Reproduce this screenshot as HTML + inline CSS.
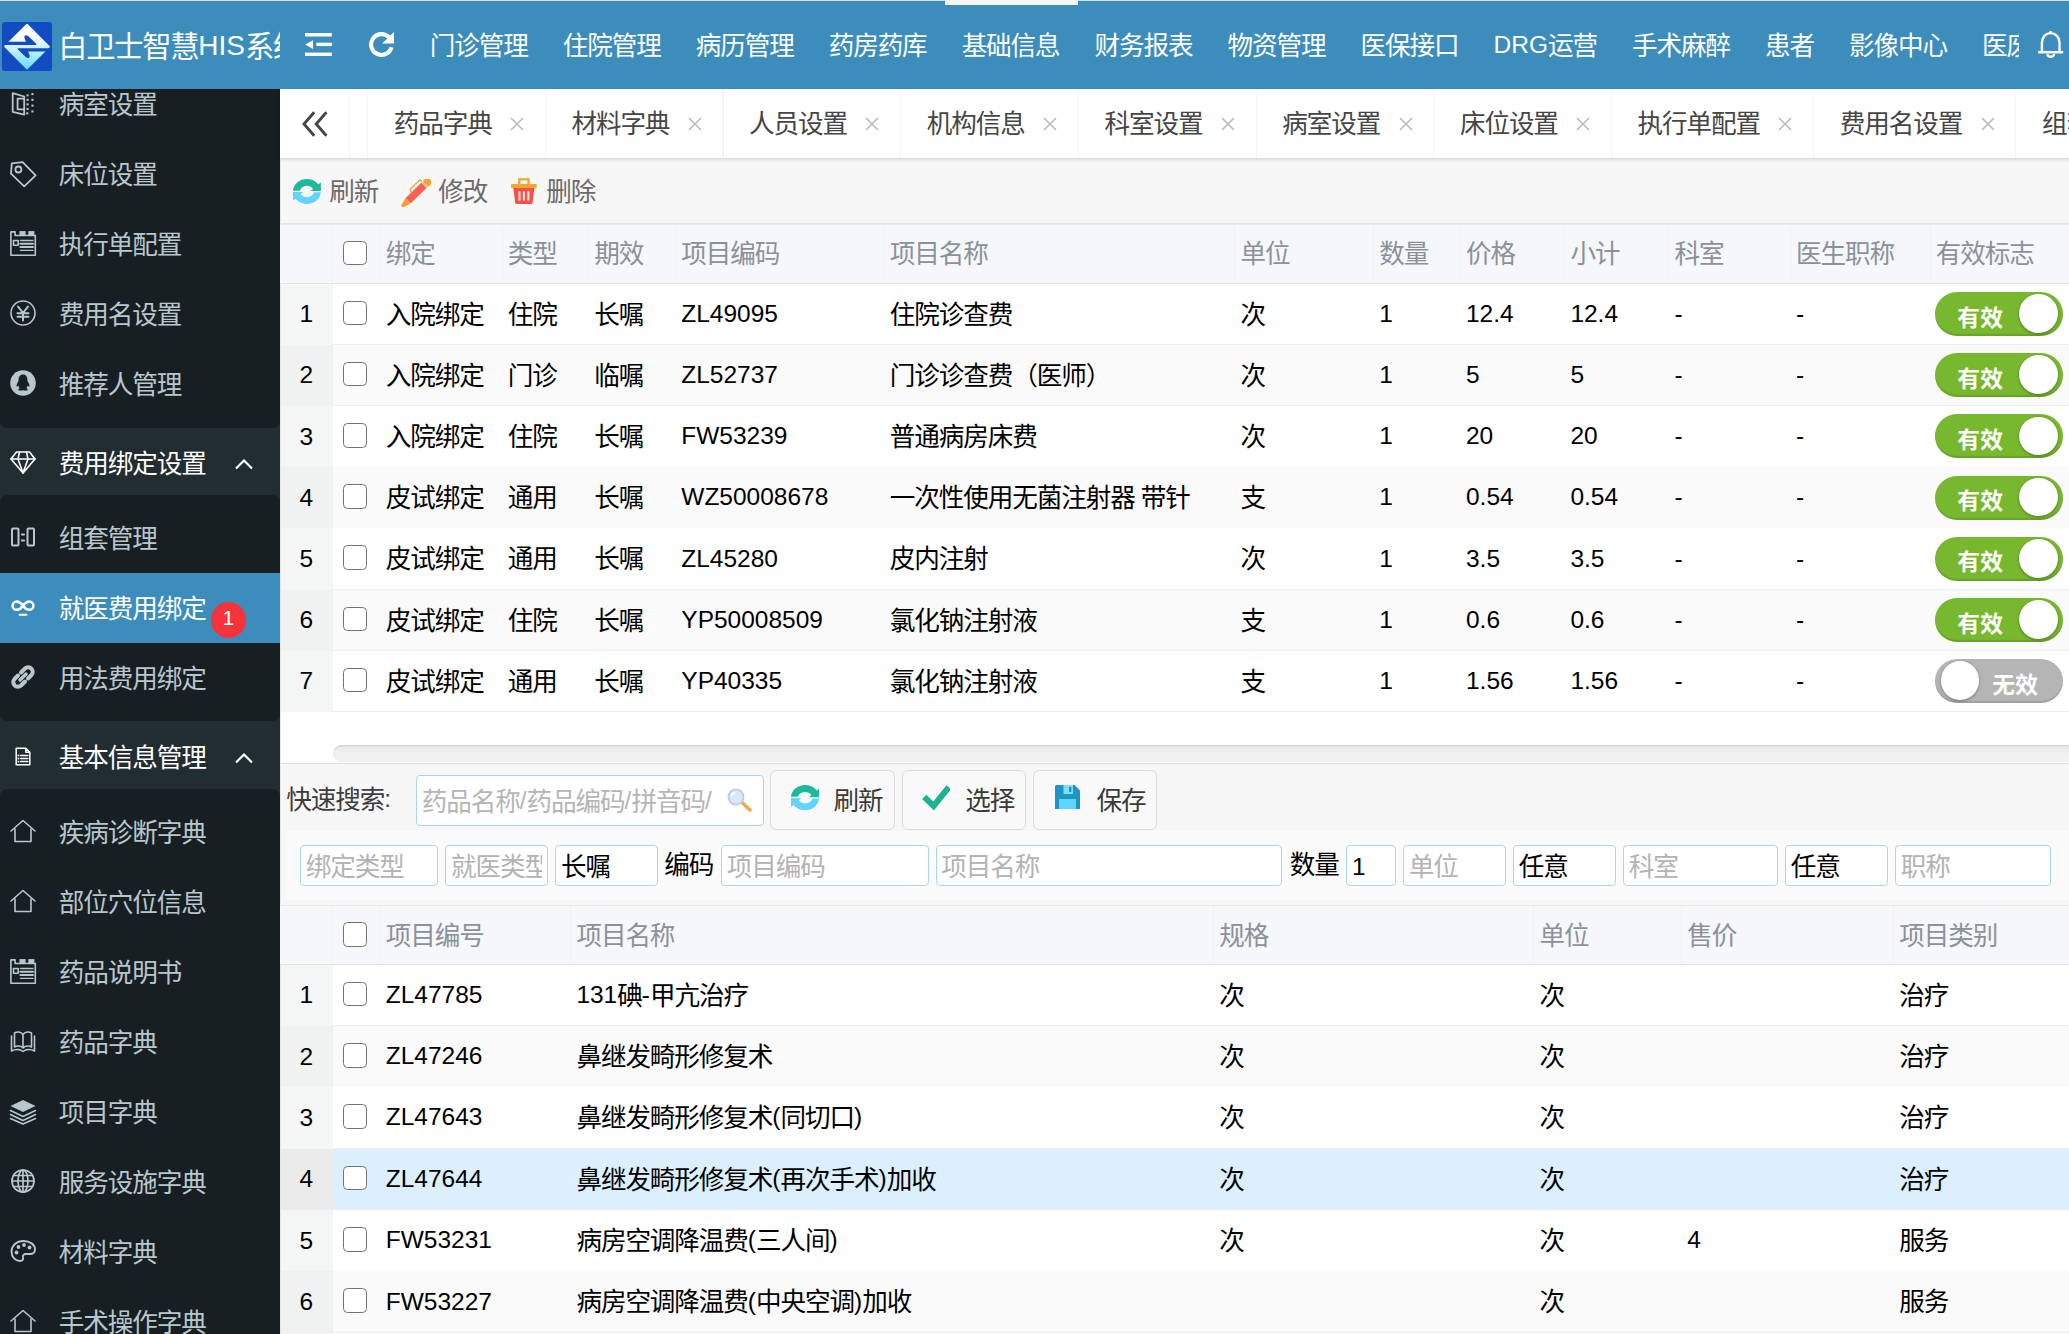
<!DOCTYPE html><html lang="zh-CN"><head><meta charset="utf-8"><title>白卫士智慧HIS系统</title>
<style>

*{box-sizing:border-box;margin:0;padding:0}
html,body{width:2069px;height:1334px;overflow:hidden;background:#fff}
body{position:relative;font-family:"Liberation Sans","Noto Sans CJK SC",sans-serif;font-size:25.6px;letter-spacing:-1.1px;color:#000;line-height:1}
.abs{position:absolute}
.l{position:relative;top:-1.8px;font-size:0.957em;letter-spacing:0}
.t{position:absolute;white-space:nowrap;line-height:30px;height:30px}
#hdr{position:absolute;left:0;top:0;width:2069px;height:89px;background:#3c8dbc;border-top:1px solid #dcdfe2;overflow:hidden}
#hdr .t{color:#fff}
#side{position:absolute;left:0;top:89px;width:280px;height:1245px;background:#222d32;overflow:hidden}
#side .blk{position:absolute;left:0;width:280px;background:#181f23;border-radius:7px}
#side .t{color:#b8c7ce;left:59px}
#side .t.h{color:#fff}
#side svg{position:absolute;overflow:visible}
#main{position:absolute;left:280px;top:89px;width:1789px;height:1245px;background:#f7f7f7;overflow:hidden}

</style></head><body>
<div id="hdr"></div>
<div class="abs" style="left:945px;top:0px;width:133px;height:5px;background:#f4f5f6"></div>
<svg class="abs" style="left:1.9px;top:21.8px;" width="50.2" height="49.3" viewBox="0 0 50.2 49.3">
<defs><linearGradient id="lg" x1="0" y1="0" x2="0" y2="1"><stop offset="0.1" stop-color="#ffffff"/><stop offset="0.3" stop-color="#f6fcff"/><stop offset="0.55" stop-color="#c9f1fd"/><stop offset="1" stop-color="#63defb"/></linearGradient>
<clipPath id="lc"><path d="M25 2.6 L47.2 24.7 L25 46.6 L2.9 24.4 Z"/></clipPath></defs>
<rect x="0" y="0" width="50.2" height="49.3" rx="3.3" fill="#134cc2"/>
<path d="M25 2.6 L47.2 24.7 L25 46.6 L2.9 24.4 Z" fill="url(#lg)" stroke="url(#lg)" stroke-width="1.6" stroke-linejoin="round"/>
<g fill="#134cc2">
<path d="M0 19.7 L24 19.7 L22.4 15.8 Q21.9 13.5 24 13.2 Q25.1 13.1 26.1 14 L34.2 21.7 Q34.9 22.5 34 23.1 L0 23.1 Z"/>
<path d="M50.2 29.6 L26.1 29.6 L27.7 33.5 Q28.2 35.8 26.1 36.1 Q25 36.2 24 35.3 L15.9 27.6 Q15.2 26.8 16.1 26.2 L50.2 26.2 Z"/>
</g>
</svg>
<div class="abs" style="left:0;top:1px;width:280px;height:88px;overflow:hidden">
<div class="t " style="left:58.3px;top:27.8px;color:#fff;font-size:29.26px;letter-spacing:-1.26px;line-height:36px;height:36px;">白卫士智慧<span class="l">HIS</span>系统</div>
</div>
<svg class="abs" style="left:304.9px;top:32.8px;" width="27" height="23.2" viewBox="0 0 27 23.2">
<g fill="#fff"><rect x="0" y="0" width="26.8" height="3.5"/><rect x="11.4" y="9.7" width="15.4" height="3.4"/><rect x="0" y="19.6" width="26.8" height="3.5"/><path d="M0.2 11.6 L8 7.2 L8 16.1 Z"/></g></svg>
<svg class="abs" style="left:368px;top:31px;" width="28" height="28" viewBox="0 0 28 28">
<path d="M20.85 6.15 A10.4 10.4 0 1 0 23.55 16.2" fill="none" stroke="#fff" stroke-width="4.1"/>
<path d="M26 1 L26 12.4 L14.1 12.4 Z" fill="#fff"/></svg>
<div class="abs" style="left:412.2px;top:1px;width:1606.7px;height:88px;overflow:hidden;white-space:nowrap;color:#fff;line-height:91.2px">
<span style="display:inline-block;padding:0 17.5px;height:88px">门诊管理</span><span style="display:inline-block;padding:0 17.5px;height:88px">住院管理</span><span style="display:inline-block;padding:0 17.5px;height:88px">病历管理</span><span style="display:inline-block;padding:0 17.5px;height:88px">药房药库</span><span style="display:inline-block;padding:0 17.5px;height:88px">基础信息</span><span style="display:inline-block;padding:0 17.5px;height:88px">财务报表</span><span style="display:inline-block;padding:0 17.5px;height:88px">物资管理</span><span style="display:inline-block;padding:0 17.5px;height:88px">医保接口</span><span style="display:inline-block;padding:0 17.5px;height:88px"><span class="l">DRG</span>运营</span><span style="display:inline-block;padding:0 17.5px;height:88px">手术麻醉</span><span style="display:inline-block;padding:0 17.5px;height:88px">患者</span><span style="display:inline-block;padding:0 17.5px;height:88px">影像中心</span><span style="display:inline-block;padding:0 17.5px;height:88px">医废管理</span><span style="display:inline-block;padding:0 17.5px;height:88px">系统设置</span>
</div>
<svg class="abs" style="left:2036.8px;top:29px;" width="28" height="30" viewBox="0 0 28 30">
<path d="M1.2 23.2 L26.2 23.2" fill="none" stroke="#fff" stroke-width="2.5"/>
<path d="M4.9 23 L4.9 13.4 A8.8 9.3 0 0 1 22.5 13.4 L22.5 23" fill="none" stroke="#fff" stroke-width="2.4"/>
<path d="M13.7 4.4 L13.7 2" fill="none" stroke="#fff" stroke-width="2.6"/>
<path d="M10.2 25 A3.6 3.6 0 0 0 17.2 25" fill="none" stroke="#fff" stroke-width="2.3"/></svg>
<div id="side">
<div class="blk" style="top:-20px;height:358.6px"></div>
<div class="blk" style="top:405.6px;height:226.39999999999998px"></div>
<div class="blk" style="top:699.7px;height:600px"></div>
<div class="abs" style="left:0;top:483.70000000000005px;width:280px;height:70px;background:#3c8dbc"></div>
<svg style="left:10px;top:0.5px;stroke-width:1.6" width="26" height="26" viewBox="0 0 26 26"><g fill="none" stroke="#b8c7ce" stroke-linejoin="round" stroke-linecap="round" stroke-width="1.8"><path d="M2.7 3.2 L14.2 6.5 L14.2 24.6 L2.7 21.8 Z"/><path d="M14.2 8.6 L7.6 8.6 L7.6 19.3 L14.2 19.3"/></g><g fill="#b8c7ce" stroke="none"><rect x="16.5" y="4.3" width="2.1" height="2.1"/><rect x="16.5" y="8.8" width="2.1" height="2.1"/><rect x="16.5" y="13.3" width="2.1" height="2.1"/><rect x="16.5" y="17.9" width="2.1" height="2.1"/><rect x="16.2" y="22.3" width="2.1" height="2.1"/><rect x="21.4" y="3" width="2.1" height="2.1"/><rect x="21.4" y="8.8" width="2.1" height="2.1"/><rect x="21.4" y="14.6" width="2.1" height="2.1"/><rect x="21.4" y="20.4" width="2.1" height="2.1"/></g></svg>
<div class="t " style="left:58.8px;top:0.8px;">病室设置</div>
<svg style="left:10px;top:71.0px;stroke-width:1.6" width="26" height="26" viewBox="0 0 26 26"><g fill="none" stroke="#b8c7ce" stroke-linejoin="round" stroke-linecap="round" stroke-width="1.8"><path d="M1.8 3.4 L12.6 2.2 L25.6 15.3 L14.2 26.3 L1 13.6 Z"/><circle cx="8.4" cy="9.5" r="3"/></g></svg>
<div class="t " style="left:58.8px;top:71.3px;">床位设置</div>
<svg style="left:10px;top:141.0px;stroke-width:1.6" width="26" height="26" viewBox="0 0 26 26"><g fill="none" stroke="#b8c7ce" stroke-linejoin="round" stroke-linecap="round"><path d="M0.9 1.9 L5.1 1.9 L5.1 5.5 L25.3 5.5 L25.3 25.2 L0.9 25.2 Z"/><rect x="3.5" y="10.5" width="4.7" height="4.8"/><path d="M10.4 10.5 L23 10.5 M10.4 20.3 L23 20.3" stroke-width="1.3"/><path d="M10.4 13.7 L23 13.7 M10.4 17 L23 17" stroke-width="2"/></g><g fill="#b8c7ce" stroke="none"><rect x="9.5" y="1.1" width="6.1" height="4.6"/><rect x="18.3" y="1.1" width="6.1" height="4.6"/></g></svg>
<div class="t " style="left:58.8px;top:141.3px;">执行单配置</div>
<svg style="left:10px;top:211.0px;stroke-width:1.6" width="26" height="26" viewBox="0 0 26 26"><g fill="none" stroke="#b8c7ce" stroke-linejoin="round" stroke-linecap="round"><circle cx="13" cy="13" r="12"/><path d="M8 6.5 L13 13 L18 6.5 M13 13 L13 20.5 M7.5 13.2 L18.5 13.2 M7.5 16.8 L18.5 16.8" stroke-width="2"/></g></svg>
<div class="t " style="left:58.8px;top:211.3px;">费用名设置</div>
<svg style="left:10px;top:281.0px;stroke-width:1.6" width="26" height="26" viewBox="0 0 26 26"><g fill="#b8c7ce" stroke="none"><circle cx="13" cy="13" r="12.8"/></g><path fill="#181f23" d="M13 4.5 C9.8 4.5 8.4 7 8.6 10 C8.6 11 8 11.8 7.4 13 C6.6 14.6 6.2 16.4 6.8 16.8 C7.3 17 7.9 16 8.3 15.6 C8.5 16.8 9 17.6 9.8 18.3 C8.8 18.7 8 19.3 8.3 20 C8.8 20.9 11.6 20.6 13 20.2 C14.4 20.6 17.2 20.9 17.7 20 C18 19.3 17.2 18.7 16.2 18.3 C17 17.6 17.5 16.8 17.7 15.6 C18.1 16 18.7 17 19.2 16.8 C19.8 16.4 19.4 14.6 18.6 13 C18 11.8 17.4 11 17.4 10 C17.6 7 16.2 4.5 13 4.5 Z"/></svg>
<div class="t " style="left:58.8px;top:281.3px;">推荐人管理</div>
<svg style="left:10px;top:360.0px;stroke-width:1.6" width="26" height="26" viewBox="0 0 26 26"><g fill="none" stroke="#fff" stroke-linejoin="round" stroke-linecap="round"><path d="M6.5 3 L19.5 3 L25 10 L13 24 L1 10 Z"/><path d="M1 10 L25 10 M9.5 3 L8 10 L13 24 L18 10 L16.5 3"/></g></svg>
<div class="t h" style="left:58.8px;top:360.3px;">费用绑定设置</div>
<svg style="left:10px;top:434.8px;stroke-width:1.6" width="26" height="26" viewBox="0 0 26 26"><g fill="none" stroke="#b8c7ce" stroke-linejoin="round" stroke-linecap="round" stroke-width="2"><rect x="2" y="4.5" width="6.5" height="17" rx="1"/><rect x="17.5" y="4.5" width="6.5" height="17" rx="1"/><path d="M12 10.5 L14 10.5 M12 16.5 L14 16.5" stroke-width="2.2"/></g></svg>
<div class="t " style="left:58.8px;top:435.1px;">组套管理</div>
<svg style="left:10px;top:504.5px;stroke-width:1.6" width="26" height="26" viewBox="0 0 26 26"><g fill="none" stroke="#fff" stroke-linejoin="round" stroke-linecap="round" stroke-width="2.5"><path d="M13 11.7 C10.8 8.6 9 7.6 6.7 7.6 A4.1 4.1 0 0 0 6.7 15.8 C9 15.8 10.8 14.8 13 11.7 C15.2 8.6 17 7.6 19.3 7.6 A4.1 4.1 0 0 1 19.3 15.8 C17 15.8 15.2 14.8 13 11.7 Z"/><path d="M9.6 20.8 L16.4 20.8" stroke-width="2.1"/></g></svg>
<div class="t " style="left:58.8px;top:504.8px;color:#fff;">就医费用绑定</div>
<svg style="left:10px;top:574.5px;stroke-width:1.6" width="26" height="26" viewBox="0 0 26 26"><g fill="none" stroke="#b8c7ce" stroke-linejoin="round" stroke-linecap="round" stroke-width="4"><path d="M11 8.5 L15 4.5 A4.6 4.6 0 0 1 21.5 11 L18 14.5"/><path d="M15 17.5 L11 21.5 A4.6 4.6 0 0 1 4.5 15 L8 11.5"/><path d="M10 16 L16 10" stroke-width="3.4"/></g></svg>
<div class="t " style="left:58.8px;top:574.8px;">用法费用绑定</div>
<svg style="left:10px;top:653.5px;stroke-width:1.6" width="26" height="26" viewBox="0 0 26 26"><g transform="translate(2.6 2.9) scale(0.8)"><g fill="none" stroke="#fff" stroke-linejoin="round" stroke-linecap="round" stroke-width="1.9"><path d="M4.5 3 L16.5 3 L21.5 8 L21.5 23.5 L4.5 23.5 Z M16.5 3 L16.5 8 L21.5 8"/><path d="M10 12 L19 12 M10 15.8 L19 15.8 M10 19.6 L19 19.6"/></g><g fill="#fff" stroke="none"><rect x="6.3" y="11" width="2" height="2"/><rect x="6.3" y="14.8" width="2" height="2"/><rect x="6.3" y="18.6" width="2" height="2"/></g></g></svg>
<div class="t h" style="left:58.8px;top:653.8px;">基本信息管理</div>
<svg style="left:10px;top:728.5px;stroke-width:1.6" width="26" height="26" viewBox="0 0 26 26"><g fill="none" stroke="#b8c7ce" stroke-linejoin="round" stroke-linecap="round"><path d="M1 13 L13 2.5 L25 13"/><path d="M5 11 L5 23.5 L21 23.5 L21 11"/></g></svg>
<div class="t " style="left:58.8px;top:728.8px;">疾病诊断字典</div>
<svg style="left:10px;top:798.5px;stroke-width:1.6" width="26" height="26" viewBox="0 0 26 26"><g fill="none" stroke="#b8c7ce" stroke-linejoin="round" stroke-linecap="round"><path d="M1 13 L13 2.5 L25 13"/><path d="M5 11 L5 23.5 L21 23.5 L21 11"/></g></svg>
<div class="t " style="left:58.8px;top:798.8px;">部位穴位信息</div>
<svg style="left:10px;top:868.5px;stroke-width:1.6" width="26" height="26" viewBox="0 0 26 26"><g fill="none" stroke="#b8c7ce" stroke-linejoin="round" stroke-linecap="round"><path d="M0.9 1.9 L5.1 1.9 L5.1 5.5 L25.3 5.5 L25.3 25.2 L0.9 25.2 Z"/><rect x="3.5" y="10.5" width="4.7" height="4.8"/><path d="M10.4 10.5 L23 10.5 M10.4 20.3 L23 20.3" stroke-width="1.3"/><path d="M10.4 13.7 L23 13.7 M10.4 17 L23 17" stroke-width="2"/></g><g fill="#b8c7ce" stroke="none"><rect x="9.5" y="1.1" width="6.1" height="4.6"/><rect x="18.3" y="1.1" width="6.1" height="4.6"/></g></svg>
<div class="t " style="left:58.8px;top:868.8px;">药品说明书</div>
<svg style="left:10px;top:938.5px;stroke-width:1.6" width="26" height="26" viewBox="0 0 26 26"><g fill="none" stroke="#b8c7ce" stroke-linejoin="round" stroke-linecap="round"><path d="M13 6.5 C11 3.5 7 3.5 4.5 5 L4.5 19 C7 17.5 11 17.5 13 20 C15 17.5 19 17.5 21.5 19 L21.5 5 C19 3.5 15 3.5 13 6.5 Z M13 6.5 L13 20"/><path d="M1.5 8 L1.5 23 C5 21 10 21 13 23.5 C16 21 21 21 24.5 23 L24.5 8"/></g></svg>
<div class="t " style="left:58.8px;top:938.8px;">药品字典</div>
<svg style="left:10px;top:1008.5px;stroke-width:1.6" width="26" height="26" viewBox="0 0 26 26"><g fill="#b8c7ce" stroke="none"><path d="M13 2 L25.5 8 L13 14 L0.5 8 Z"/></g><g fill="none" stroke="#b8c7ce" stroke-linejoin="round" stroke-linecap="round"><path d="M0.5 12.5 L13 18.5 L25.5 12.5 M0.5 16.5 L13 22.5 L25.5 16.5 M0.5 20.5 L13 26 L25.5 20.5" stroke-width="1.6"/></g></svg>
<div class="t " style="left:58.8px;top:1008.8px;">项目字典</div>
<svg style="left:10px;top:1078.5px;stroke-width:1.6" width="26" height="26" viewBox="0 0 26 26"><g fill="none" stroke="#b8c7ce" stroke-linejoin="round" stroke-linecap="round" stroke-width="1.7"><circle cx="13" cy="13" r="11"/><ellipse cx="13" cy="13" rx="5" ry="11"/><path d="M13 2 L13 24 M2 13 L24 13 M3.6 7.5 L22.4 7.5 M3.6 18.5 L22.4 18.5"/></g></svg>
<div class="t " style="left:58.8px;top:1078.8px;">服务设施字典</div>
<svg style="left:10px;top:1148.5px;stroke-width:1.6" width="26" height="26" viewBox="0 0 26 26"><g fill="none" stroke="#b8c7ce" stroke-linejoin="round" stroke-linecap="round" stroke-width="1.9"><path d="M13.5 3 C6 3 1.5 8 1.5 13.5 C1.5 19 5.5 23 10 23 C13 23 13.5 21 13 19.5 C12.5 17.5 13.5 16 16 16 L20 16 C23 16 25 14 25 11.5 C25 6.5 20 3 13.5 3 Z"/></g><g fill="#b8c7ce" stroke="none"><circle cx="6.5" cy="14.5" r="1.9"/><circle cx="8.5" cy="9" r="1.9"/><circle cx="14" cy="7" r="1.9"/><circle cx="19.5" cy="9.5" r="1.9"/></g></svg>
<div class="t " style="left:58.8px;top:1148.8px;">材料字典</div>
<svg style="left:10px;top:1218.5px;stroke-width:1.6" width="26" height="26" viewBox="0 0 26 26"><g fill="none" stroke="#b8c7ce" stroke-linejoin="round" stroke-linecap="round"><path d="M1 13 L13 2.5 L25 13"/><path d="M5 11 L5 23.5 L21 23.5 L21 11"/></g></svg>
<div class="t " style="left:58.8px;top:1218.8px;">手术操作字典</div>
<svg style="left:234px;top:369px" width="20" height="12" viewBox="0 0 20 12"><path d="M2 10.5 L10 2.5 L18 10.5" fill="none" stroke="#fff" stroke-width="2.2"/></svg>
<svg style="left:234px;top:662.5px" width="20" height="12" viewBox="0 0 20 12"><path d="M2 10.5 L10 2.5 L18 10.5" fill="none" stroke="#fff" stroke-width="2.2"/></svg>
<div class="abs" style="left:210.5px;top:513px;width:35.5px;height:35.5px;border-radius:50%;background:#f5333a;color:#fff;font-size:21px;letter-spacing:0;line-height:32px;text-align:center">1</div>
</div>
<div class="abs" style="left:280px;top:89px;width:1789px;height:1245px;background:#f7f7f7"></div>
<div class="abs" style="left:280px;top:89px;width:1789px;height:69.8px;background:#fff;border-bottom:1px solid #dcdcdc;box-shadow:0 1px 3px rgba(0,0,0,.12);z-index:2"></div>
<div class="abs" style="left:280px;top:89px;width:1789px;height:70px;overflow:hidden;z-index:3">
<div class="abs" style="left:69px;top:0;width:1.2px;height:69px;background:#f4f4f4"></div>
<div class="abs" style="left:87px;top:0;width:1.2px;height:69px;background:#f4f4f4"></div>
<svg class="abs" style="left:22px;top:22px" width="26" height="26" viewBox="0 0 26 26"><path d="M12.2 1.2 L2 13 L12.2 24.8 M24.4 1.2 L14.2 13 L24.4 24.8" fill="none" stroke="#464646" stroke-width="2.9"/></svg>
<div class="t" style="left:113.7px;top:19.5px;color:#454545">药品字典</div>
<svg class="abs" style="left:230.0px;top:28px" width="14" height="14" viewBox="0 0 14 14"><path d="M1 1 L13 13 M13 1 L1 13" stroke="#b9b9b9" stroke-width="1.5" fill="none"/></svg>
<div class="abs" style="left:264.70000000000005px;top:0;width:1.2px;height:69px;background:#f4f4f4"></div>
<div class="t" style="left:291.4px;top:19.5px;color:#454545">材料字典</div>
<svg class="abs" style="left:407.7px;top:28px" width="14" height="14" viewBox="0 0 14 14"><path d="M1 1 L13 13 M13 1 L1 13" stroke="#b9b9b9" stroke-width="1.5" fill="none"/></svg>
<div class="abs" style="left:442.4000000000001px;top:0;width:1.2px;height:69px;background:#f4f4f4"></div>
<div class="t" style="left:469.1px;top:19.5px;color:#454545">人员设置</div>
<svg class="abs" style="left:585.4px;top:28px" width="14" height="14" viewBox="0 0 14 14"><path d="M1 1 L13 13 M13 1 L1 13" stroke="#b9b9b9" stroke-width="1.5" fill="none"/></svg>
<div class="abs" style="left:620.1000000000001px;top:0;width:1.2px;height:69px;background:#f4f4f4"></div>
<div class="t" style="left:646.8px;top:19.5px;color:#454545">机构信息</div>
<svg class="abs" style="left:763.1px;top:28px" width="14" height="14" viewBox="0 0 14 14"><path d="M1 1 L13 13 M13 1 L1 13" stroke="#b9b9b9" stroke-width="1.5" fill="none"/></svg>
<div class="abs" style="left:797.8000000000002px;top:0;width:1.2px;height:69px;background:#f4f4f4"></div>
<div class="t" style="left:824.5px;top:19.5px;color:#454545">科室设置</div>
<svg class="abs" style="left:940.8px;top:28px" width="14" height="14" viewBox="0 0 14 14"><path d="M1 1 L13 13 M13 1 L1 13" stroke="#b9b9b9" stroke-width="1.5" fill="none"/></svg>
<div class="abs" style="left:975.5000000000002px;top:0;width:1.2px;height:69px;background:#f4f4f4"></div>
<div class="t" style="left:1002.2px;top:19.5px;color:#454545">病室设置</div>
<svg class="abs" style="left:1118.5px;top:28px" width="14" height="14" viewBox="0 0 14 14"><path d="M1 1 L13 13 M13 1 L1 13" stroke="#b9b9b9" stroke-width="1.5" fill="none"/></svg>
<div class="abs" style="left:1153.2000000000003px;top:0;width:1.2px;height:69px;background:#f4f4f4"></div>
<div class="t" style="left:1179.9px;top:19.5px;color:#454545">床位设置</div>
<svg class="abs" style="left:1296.2px;top:28px" width="14" height="14" viewBox="0 0 14 14"><path d="M1 1 L13 13 M13 1 L1 13" stroke="#b9b9b9" stroke-width="1.5" fill="none"/></svg>
<div class="abs" style="left:1330.9000000000003px;top:0;width:1.2px;height:69px;background:#f4f4f4"></div>
<div class="t" style="left:1357.6px;top:19.5px;color:#454545">执行单配置</div>
<svg class="abs" style="left:1498.4px;top:28px" width="14" height="14" viewBox="0 0 14 14"><path d="M1 1 L13 13 M13 1 L1 13" stroke="#b9b9b9" stroke-width="1.5" fill="none"/></svg>
<div class="abs" style="left:1533.1000000000004px;top:0;width:1.2px;height:69px;background:#f4f4f4"></div>
<div class="t" style="left:1559.8px;top:19.5px;color:#454545">费用名设置</div>
<svg class="abs" style="left:1700.6px;top:28px" width="14" height="14" viewBox="0 0 14 14"><path d="M1 1 L13 13 M13 1 L1 13" stroke="#b9b9b9" stroke-width="1.5" fill="none"/></svg>
<div class="abs" style="left:1735.3000000000004px;top:0;width:1.2px;height:69px;background:#f4f4f4"></div>
<div class="t" style="left:1762.0px;top:19.5px;color:#454545">组套管理</div>
<svg class="abs" style="left:1878.3px;top:28px" width="14" height="14" viewBox="0 0 14 14"><path d="M1 1 L13 13 M13 1 L1 13" stroke="#b9b9b9" stroke-width="1.5" fill="none"/></svg>
<div class="abs" style="left:1913.0000000000005px;top:0;width:1.2px;height:69px;background:#f4f4f4"></div>
</div>
<div class="abs" style="left:280px;top:223px;width:1789px;height:1px;background:#e4e4e4"></div>
<svg class="abs" style="left:293px;top:178.9px;" width="27.8" height="25.0" viewBox="0 0 27.8 25">
<defs><clipPath id="ct293"><rect x="0" y="0" width="27.8" height="11.7"/></clipPath><clipPath id="cb293"><rect x="0" y="13.3" width="27.8" height="11.7"/></clipPath></defs>
<g clip-path="url(#ct293)"><ellipse cx="13.9" cy="12.5" rx="10.5" ry="9.1" fill="none" stroke="#1db99b" stroke-width="6.8"/></g>
<path d="M27.8 3.3 L27.8 12 L17.6 12 Z" fill="#1db99b"/>
<g clip-path="url(#cb293)"><ellipse cx="13.9" cy="12.5" rx="10.5" ry="9.1" fill="none" stroke="#62d4fb" stroke-width="6.8"/></g>
<path d="M0 21.7 L0 13 L10.2 13 Z" fill="#62d4fb"/></svg>
<div class="t " style="left:329.3px;top:176.8px;color:#6b6b6b;">刷新</div>
<svg class="abs" style="left:401px;top:179px;" width="30" height="28" viewBox="0 0 30 28">
<g transform="rotate(-44 15 14)"><rect x="4" y="10.4" width="22" height="7.4" fill="#fb5f52"/><path d="M4 10.4 L-4.5 12.6 L-4.5 15.6 L4 17.8 Z" fill="#f9a033"/><rect x="26" y="10.4" width="2" height="7.4" fill="#f9c27a"/><rect x="28" y="10" width="6.5" height="8.2" rx="1.8" fill="#f9a033"/><path d="M12 10 L13.5 7.2 L27 7.2 L27 10" fill="none" stroke="#f9a033" stroke-width="1.3"/></g></svg>
<div class="t " style="left:438.3px;top:176.8px;color:#6b6b6b;">修改</div>
<svg class="abs" style="left:511.2px;top:177.8px;" width="25.8" height="26.7" viewBox="0 0 28 29">
<path d="M9 7.5 L9 1.5 L19 1.5 L19 7.5" fill="none" stroke="#f7a531" stroke-width="2.6"/>
<rect x="0" y="6.5" width="28" height="4.6" rx="1.2" fill="#f7a531"/>
<path d="M2.5 11 L25.5 11 L23.5 26.5 C23.4 27.8 22.6 28.5 21.5 28.5 L6.5 28.5 C5.4 28.5 4.6 27.8 4.5 26.5 Z" fill="#f5514c"/>
<g fill="#fde3dc"><rect x="8" y="14.5" width="2.3" height="10"/><rect x="12.85" y="14.5" width="2.3" height="10"/><rect x="17.7" y="14.5" width="2.3" height="10"/></g></svg>
<div class="t " style="left:546.3px;top:176.8px;color:#6b6b6b;">删除</div>
<div class="abs" style="left:280px;top:283px;width:1789px;height:480px;background:#fff"></div>
<div class="abs" style="left:280px;top:223.8px;width:1789px;height:60.699999999999996px;background:#f5f7fa;border-top:1px solid #e9ebef;border-bottom:1.4px solid #e1e3e8;z-index:1"></div>
<div class="abs" style="left:332.0px;top:224.8px;width:1px;height:57.8px;background:#eff1f5;z-index:1"></div>
<div class="abs" style="left:379.5px;top:224.8px;width:1px;height:57.8px;background:#eff1f5;z-index:1"></div>
<div class="abs" style="left:501.5px;top:224.8px;width:1px;height:57.8px;background:#eff1f5;z-index:1"></div>
<div class="abs" style="left:588.0px;top:224.8px;width:1px;height:57.8px;background:#eff1f5;z-index:1"></div>
<div class="abs" style="left:675.0px;top:224.8px;width:1px;height:57.8px;background:#eff1f5;z-index:1"></div>
<div class="abs" style="left:883.5px;top:224.8px;width:1px;height:57.8px;background:#eff1f5;z-index:1"></div>
<div class="abs" style="left:1234.1px;top:224.8px;width:1px;height:57.8px;background:#eff1f5;z-index:1"></div>
<div class="abs" style="left:1372.9px;top:224.8px;width:1px;height:57.8px;background:#eff1f5;z-index:1"></div>
<div class="abs" style="left:1459.7px;top:224.8px;width:1px;height:57.8px;background:#eff1f5;z-index:1"></div>
<div class="abs" style="left:1564.1px;top:224.8px;width:1px;height:57.8px;background:#eff1f5;z-index:1"></div>
<div class="abs" style="left:1668.1px;top:224.8px;width:1px;height:57.8px;background:#eff1f5;z-index:1"></div>
<div class="abs" style="left:1789.7px;top:224.8px;width:1px;height:57.8px;background:#eff1f5;z-index:1"></div>
<div class="abs" style="left:1929.5px;top:224.8px;width:1px;height:57.8px;background:#eff1f5;z-index:1"></div>
<div class="abs" style="left:342.85px;top:240.85px;width:24.5px;height:24.5px;border:1.8px solid #737373;border-radius:4.5px;background:#fff;z-index:2"></div>
<div class="t " style="left:385.8px;top:239.3px;color:#8b919a;z-index:2;">绑定</div>
<div class="t " style="left:507.8px;top:239.3px;color:#8b919a;z-index:2;">类型</div>
<div class="t " style="left:594.3px;top:239.3px;color:#8b919a;z-index:2;">期效</div>
<div class="t " style="left:681.3px;top:239.3px;color:#8b919a;z-index:2;">项目编码</div>
<div class="t " style="left:889.8px;top:239.3px;color:#8b919a;z-index:2;">项目名称</div>
<div class="t " style="left:1240.4px;top:239.3px;color:#8b919a;z-index:2;">单位</div>
<div class="t " style="left:1379.2px;top:239.3px;color:#8b919a;z-index:2;">数量</div>
<div class="t " style="left:1466.0px;top:239.3px;color:#8b919a;z-index:2;">价格</div>
<div class="t " style="left:1570.4px;top:239.3px;color:#8b919a;z-index:2;">小计</div>
<div class="t " style="left:1674.4px;top:239.3px;color:#8b919a;z-index:2;">科室</div>
<div class="t " style="left:1796.0px;top:239.3px;color:#8b919a;z-index:2;">医生职称</div>
<div class="t " style="left:1935.8px;top:239.3px;color:#8b919a;z-index:2;">有效标志</div>
<div class="abs" style="left:280px;top:283.6px;width:1789px;height:61.7px;background:#fff;border-bottom:1px solid #eeeeee"></div>
<div class="abs" style="left:280px;top:283.6px;width:52.5px;height:61.2px;background:#f4f5f5"></div>
<div class="t" style="left:280px;width:52.5px;text-align:center;letter-spacing:0;top:300.0px"><span class="l">1</span></div>
<div class="abs" style="left:342.85px;top:300.65px;width:24.5px;height:24.5px;border:1.8px solid #737373;border-radius:4.5px;background:#fff;z-index:2"></div>
<div class="t " style="left:385.8px;top:299.5px;">入院绑定</div>
<div class="t " style="left:507.8px;top:299.5px;">住院</div>
<div class="t " style="left:594.3px;top:299.5px;">长嘱</div>
<div class="t " style="left:681.3px;top:299.5px;"><span class="l">ZL49095</span></div>
<div class="t " style="left:889.8px;top:299.5px;">住院诊查费</div>
<div class="t " style="left:1240.4px;top:299.5px;">次</div>
<div class="t " style="left:1379.2px;top:299.5px;"><span class="l">1</span></div>
<div class="t " style="left:1466.0px;top:299.5px;"><span class="l">12.4</span></div>
<div class="t " style="left:1570.4px;top:299.5px;"><span class="l">12.4</span></div>
<div class="t " style="left:1674.4px;top:299.5px;"><span class="l">-</span></div>
<div class="t " style="left:1796.0px;top:299.5px;"><span class="l">-</span></div>
<div class="abs" style="left:1935px;top:291.9px;width:128px;height:44px;border-radius:22px;background:#77b82f;box-shadow:inset 0 -2px 1px rgba(0,0,0,.12)"></div>
<div class="abs" style="left:2019px;top:294.1px;width:38.8px;height:38.8px;border-radius:50%;background:#fff;box-shadow:0 1px 3px rgba(0,0,0,.35)"></div>
<div class="t " style="left:1957.2px;top:302.6px;color:#fff;font-size:22.78px;letter-spacing:-0.98px;font-weight:bold;letter-spacing:0.4px">有效</div>
<div class="abs" style="left:280px;top:344.8px;width:1789px;height:61.7px;background:#fafafa;border-bottom:1px solid #eeeeee"></div>
<div class="abs" style="left:280px;top:344.8px;width:52.5px;height:61.2px;background:#f0f1f1"></div>
<div class="t" style="left:280px;width:52.5px;text-align:center;letter-spacing:0;top:361.2px"><span class="l">2</span></div>
<div class="abs" style="left:342.85px;top:361.85px;width:24.5px;height:24.5px;border:1.8px solid #737373;border-radius:4.5px;background:#fff;z-index:2"></div>
<div class="t " style="left:385.8px;top:360.7px;">入院绑定</div>
<div class="t " style="left:507.8px;top:360.7px;">门诊</div>
<div class="t " style="left:594.3px;top:360.7px;">临嘱</div>
<div class="t " style="left:681.3px;top:360.7px;"><span class="l">ZL52737</span></div>
<div class="t " style="left:889.8px;top:360.7px;">门诊诊查费（医师）</div>
<div class="t " style="left:1240.4px;top:360.7px;">次</div>
<div class="t " style="left:1379.2px;top:360.7px;"><span class="l">1</span></div>
<div class="t " style="left:1466.0px;top:360.7px;"><span class="l">5</span></div>
<div class="t " style="left:1570.4px;top:360.7px;"><span class="l">5</span></div>
<div class="t " style="left:1674.4px;top:360.7px;"><span class="l">-</span></div>
<div class="t " style="left:1796.0px;top:360.7px;"><span class="l">-</span></div>
<div class="abs" style="left:1935px;top:353.1px;width:128px;height:44px;border-radius:22px;background:#77b82f;box-shadow:inset 0 -2px 1px rgba(0,0,0,.12)"></div>
<div class="abs" style="left:2019px;top:355.3px;width:38.8px;height:38.8px;border-radius:50%;background:#fff;box-shadow:0 1px 3px rgba(0,0,0,.35)"></div>
<div class="t " style="left:1957.2px;top:363.8px;color:#fff;font-size:22.78px;letter-spacing:-0.98px;font-weight:bold;letter-spacing:0.4px">有效</div>
<div class="abs" style="left:280px;top:406.0px;width:1789px;height:61.7px;background:#fff;border-bottom:1px solid #eeeeee"></div>
<div class="abs" style="left:280px;top:406.0px;width:52.5px;height:61.2px;background:#f4f5f5"></div>
<div class="t" style="left:280px;width:52.5px;text-align:center;letter-spacing:0;top:422.4px"><span class="l">3</span></div>
<div class="abs" style="left:342.85px;top:423.05px;width:24.5px;height:24.5px;border:1.8px solid #737373;border-radius:4.5px;background:#fff;z-index:2"></div>
<div class="t " style="left:385.8px;top:421.9px;">入院绑定</div>
<div class="t " style="left:507.8px;top:421.9px;">住院</div>
<div class="t " style="left:594.3px;top:421.9px;">长嘱</div>
<div class="t " style="left:681.3px;top:421.9px;"><span class="l">FW53239</span></div>
<div class="t " style="left:889.8px;top:421.9px;">普通病房床费</div>
<div class="t " style="left:1240.4px;top:421.9px;">次</div>
<div class="t " style="left:1379.2px;top:421.9px;"><span class="l">1</span></div>
<div class="t " style="left:1466.0px;top:421.9px;"><span class="l">20</span></div>
<div class="t " style="left:1570.4px;top:421.9px;"><span class="l">20</span></div>
<div class="t " style="left:1674.4px;top:421.9px;"><span class="l">-</span></div>
<div class="t " style="left:1796.0px;top:421.9px;"><span class="l">-</span></div>
<div class="abs" style="left:1935px;top:414.3px;width:128px;height:44px;border-radius:22px;background:#77b82f;box-shadow:inset 0 -2px 1px rgba(0,0,0,.12)"></div>
<div class="abs" style="left:2019px;top:416.5px;width:38.8px;height:38.8px;border-radius:50%;background:#fff;box-shadow:0 1px 3px rgba(0,0,0,.35)"></div>
<div class="t " style="left:1957.2px;top:425.0px;color:#fff;font-size:22.78px;letter-spacing:-0.98px;font-weight:bold;letter-spacing:0.4px">有效</div>
<div class="abs" style="left:280px;top:467.2px;width:1789px;height:61.7px;background:#fafafa;border-bottom:1px solid #eeeeee"></div>
<div class="abs" style="left:280px;top:467.2px;width:52.5px;height:61.2px;background:#f0f1f1"></div>
<div class="t" style="left:280px;width:52.5px;text-align:center;letter-spacing:0;top:483.6px"><span class="l">4</span></div>
<div class="abs" style="left:342.85px;top:484.25px;width:24.5px;height:24.5px;border:1.8px solid #737373;border-radius:4.5px;background:#fff;z-index:2"></div>
<div class="t " style="left:385.8px;top:483.1px;">皮试绑定</div>
<div class="t " style="left:507.8px;top:483.1px;">通用</div>
<div class="t " style="left:594.3px;top:483.1px;">长嘱</div>
<div class="t " style="left:681.3px;top:483.1px;"><span class="l">WZ50008678</span></div>
<div class="t " style="left:889.8px;top:483.1px;">一次性使用无菌注射器 带针</div>
<div class="t " style="left:1240.4px;top:483.1px;">支</div>
<div class="t " style="left:1379.2px;top:483.1px;"><span class="l">1</span></div>
<div class="t " style="left:1466.0px;top:483.1px;"><span class="l">0.54</span></div>
<div class="t " style="left:1570.4px;top:483.1px;"><span class="l">0.54</span></div>
<div class="t " style="left:1674.4px;top:483.1px;"><span class="l">-</span></div>
<div class="t " style="left:1796.0px;top:483.1px;"><span class="l">-</span></div>
<div class="abs" style="left:1935px;top:475.5px;width:128px;height:44px;border-radius:22px;background:#77b82f;box-shadow:inset 0 -2px 1px rgba(0,0,0,.12)"></div>
<div class="abs" style="left:2019px;top:477.7px;width:38.8px;height:38.8px;border-radius:50%;background:#fff;box-shadow:0 1px 3px rgba(0,0,0,.35)"></div>
<div class="t " style="left:1957.2px;top:486.2px;color:#fff;font-size:22.78px;letter-spacing:-0.98px;font-weight:bold;letter-spacing:0.4px">有效</div>
<div class="abs" style="left:280px;top:528.4px;width:1789px;height:61.7px;background:#fff;border-bottom:1px solid #eeeeee"></div>
<div class="abs" style="left:280px;top:528.4px;width:52.5px;height:61.2px;background:#f4f5f5"></div>
<div class="t" style="left:280px;width:52.5px;text-align:center;letter-spacing:0;top:544.8px"><span class="l">5</span></div>
<div class="abs" style="left:342.85px;top:545.45px;width:24.5px;height:24.5px;border:1.8px solid #737373;border-radius:4.5px;background:#fff;z-index:2"></div>
<div class="t " style="left:385.8px;top:544.3px;">皮试绑定</div>
<div class="t " style="left:507.8px;top:544.3px;">通用</div>
<div class="t " style="left:594.3px;top:544.3px;">长嘱</div>
<div class="t " style="left:681.3px;top:544.3px;"><span class="l">ZL45280</span></div>
<div class="t " style="left:889.8px;top:544.3px;">皮内注射</div>
<div class="t " style="left:1240.4px;top:544.3px;">次</div>
<div class="t " style="left:1379.2px;top:544.3px;"><span class="l">1</span></div>
<div class="t " style="left:1466.0px;top:544.3px;"><span class="l">3.5</span></div>
<div class="t " style="left:1570.4px;top:544.3px;"><span class="l">3.5</span></div>
<div class="t " style="left:1674.4px;top:544.3px;"><span class="l">-</span></div>
<div class="t " style="left:1796.0px;top:544.3px;"><span class="l">-</span></div>
<div class="abs" style="left:1935px;top:536.7px;width:128px;height:44px;border-radius:22px;background:#77b82f;box-shadow:inset 0 -2px 1px rgba(0,0,0,.12)"></div>
<div class="abs" style="left:2019px;top:538.9px;width:38.8px;height:38.8px;border-radius:50%;background:#fff;box-shadow:0 1px 3px rgba(0,0,0,.35)"></div>
<div class="t " style="left:1957.2px;top:547.4px;color:#fff;font-size:22.78px;letter-spacing:-0.98px;font-weight:bold;letter-spacing:0.4px">有效</div>
<div class="abs" style="left:280px;top:589.6px;width:1789px;height:61.7px;background:#fafafa;border-bottom:1px solid #eeeeee"></div>
<div class="abs" style="left:280px;top:589.6px;width:52.5px;height:61.2px;background:#f0f1f1"></div>
<div class="t" style="left:280px;width:52.5px;text-align:center;letter-spacing:0;top:606.0px"><span class="l">6</span></div>
<div class="abs" style="left:342.85px;top:606.65px;width:24.5px;height:24.5px;border:1.8px solid #737373;border-radius:4.5px;background:#fff;z-index:2"></div>
<div class="t " style="left:385.8px;top:605.5px;">皮试绑定</div>
<div class="t " style="left:507.8px;top:605.5px;">住院</div>
<div class="t " style="left:594.3px;top:605.5px;">长嘱</div>
<div class="t " style="left:681.3px;top:605.5px;"><span class="l">YP50008509</span></div>
<div class="t " style="left:889.8px;top:605.5px;">氯化钠注射液</div>
<div class="t " style="left:1240.4px;top:605.5px;">支</div>
<div class="t " style="left:1379.2px;top:605.5px;"><span class="l">1</span></div>
<div class="t " style="left:1466.0px;top:605.5px;"><span class="l">0.6</span></div>
<div class="t " style="left:1570.4px;top:605.5px;"><span class="l">0.6</span></div>
<div class="t " style="left:1674.4px;top:605.5px;"><span class="l">-</span></div>
<div class="t " style="left:1796.0px;top:605.5px;"><span class="l">-</span></div>
<div class="abs" style="left:1935px;top:597.9px;width:128px;height:44px;border-radius:22px;background:#77b82f;box-shadow:inset 0 -2px 1px rgba(0,0,0,.12)"></div>
<div class="abs" style="left:2019px;top:600.1px;width:38.8px;height:38.8px;border-radius:50%;background:#fff;box-shadow:0 1px 3px rgba(0,0,0,.35)"></div>
<div class="t " style="left:1957.2px;top:608.6px;color:#fff;font-size:22.78px;letter-spacing:-0.98px;font-weight:bold;letter-spacing:0.4px">有效</div>
<div class="abs" style="left:280px;top:650.8000000000001px;width:1789px;height:61.7px;background:#fff;border-bottom:1px solid #eeeeee"></div>
<div class="abs" style="left:280px;top:650.8000000000001px;width:52.5px;height:61.2px;background:#f4f5f5"></div>
<div class="t" style="left:280px;width:52.5px;text-align:center;letter-spacing:0;top:667.2px"><span class="l">7</span></div>
<div class="abs" style="left:342.85px;top:667.85px;width:24.5px;height:24.5px;border:1.8px solid #737373;border-radius:4.5px;background:#fff;z-index:2"></div>
<div class="t " style="left:385.8px;top:666.7px;">皮试绑定</div>
<div class="t " style="left:507.8px;top:666.7px;">通用</div>
<div class="t " style="left:594.3px;top:666.7px;">长嘱</div>
<div class="t " style="left:681.3px;top:666.7px;"><span class="l">YP40335</span></div>
<div class="t " style="left:889.8px;top:666.7px;">氯化钠注射液</div>
<div class="t " style="left:1240.4px;top:666.7px;">支</div>
<div class="t " style="left:1379.2px;top:666.7px;"><span class="l">1</span></div>
<div class="t " style="left:1466.0px;top:666.7px;"><span class="l">1.56</span></div>
<div class="t " style="left:1570.4px;top:666.7px;"><span class="l">1.56</span></div>
<div class="t " style="left:1674.4px;top:666.7px;"><span class="l">-</span></div>
<div class="t " style="left:1796.0px;top:666.7px;"><span class="l">-</span></div>
<div class="abs" style="left:1935px;top:659.1px;width:128px;height:44px;border-radius:22px;background:#b5b5b5;box-shadow:inset 0 -2px 1px rgba(0,0,0,.12)"></div>
<div class="abs" style="left:1940.5px;top:661.3px;width:38.8px;height:38.8px;border-radius:50%;background:#fff;box-shadow:0 1px 3px rgba(0,0,0,.35)"></div>
<div class="t " style="left:1992.2px;top:669.8px;color:#fff;font-size:22.78px;letter-spacing:-0.98px;font-weight:bold;letter-spacing:0.4px">无效</div>
<div class="abs" style="left:333px;top:744.8px;width:1760px;height:17px;background:linear-gradient(#e6e6e6,#efefef 35%,#f1f1f1);border-radius:8.5px;box-shadow:inset 0 1px 2px rgba(0,0,0,.10)"></div>
<div class="abs" style="left:280px;top:763px;width:1789px;height:1.2px;background:#e0e0e0"></div>
<div class="abs" style="left:280px;top:764.2px;width:1789px;height:67.5px;background:#f7f7f7"></div>
<div class="t " style="left:286.3px;top:784.8px;color:#3d3d3d;">快速搜索<span class="l">:</span></div>
<div class="abs" style="left:416px;top:775.2px;width:347.8px;height:50.4px;background:#fff;border:1.5px solid #a9d6ee;border-radius:4px"></div>
<div class="abs" style="left:418px;top:777px;width:295.3px;height:47px;overflow:hidden">
<div class="t " style="left:3.8px;top:9.8px;color:#b5b5b5;">药品名称<span class="l">/</span>药品编码<span class="l">/</span>拼音码<span class="l">/</span>名称</div>
</div>
<svg class="abs" style="left:727.3px;top:787.7px;" width="25.5" height="24" viewBox="0 0 25.5 24">
<path d="M14.5 14 L23 22" stroke="#f3a64a" stroke-width="3.6" stroke-linecap="round"/>
<circle cx="9" cy="9" r="7.6" fill="#d5e9fa" stroke="#c3cbd3" stroke-width="1.9"/>
<path d="M4.6 8 A4.6 4.6 0 0 1 8.2 4.5" fill="none" stroke="#fff" stroke-width="1.8"/></svg>
<div class="abs" style="left:770.4px;top:770px;width:124.3px;height:60.4px;background:#f9f9f9;border:1px solid #dcdcdc;border-radius:6px"></div>
<svg class="abs" style="left:790.9px;top:785px;" width="28.2" height="25.36" viewBox="0 0 27.8 25">
<defs><clipPath id="ct790"><rect x="0" y="0" width="27.8" height="11.7"/></clipPath><clipPath id="cb790"><rect x="0" y="13.3" width="27.8" height="11.7"/></clipPath></defs>
<g clip-path="url(#ct790)"><ellipse cx="13.9" cy="12.5" rx="10.5" ry="9.1" fill="none" stroke="#1db99b" stroke-width="6.8"/></g>
<path d="M27.8 3.3 L27.8 12 L17.6 12 Z" fill="#1db99b"/>
<g clip-path="url(#cb790)"><ellipse cx="13.9" cy="12.5" rx="10.5" ry="9.1" fill="none" stroke="#62d4fb" stroke-width="6.8"/></g>
<path d="M0 21.7 L0 13 L10.2 13 Z" fill="#62d4fb"/></svg>
<div class="t " style="left:833.5px;top:786.4px;color:#3a3a3a;">刷新</div>
<div class="abs" style="left:902.2px;top:770px;width:123.8px;height:60.4px;background:#f9f9f9;border:1px solid #dcdcdc;border-radius:6px"></div>
<svg class="abs" style="left:921.5px;top:785px;" width="28.8" height="24.8" viewBox="0 0 28.8 24.8"><path d="M2.2 11.8 L11.6 21 L26.8 2.2" fill="none" stroke="#1cb394" stroke-width="6"/></svg>
<div class="t " style="left:965.3px;top:786.4px;color:#3a3a3a;">选择</div>
<div class="abs" style="left:1033.3px;top:770px;width:124.2px;height:60.4px;background:#f9f9f9;border:1px solid #dcdcdc;border-radius:6px"></div>
<svg class="abs" style="left:1054.8px;top:785px;" width="25" height="24.4" viewBox="0 0 25 24.4">
<path d="M0 1.5 C0 0.6 0.6 0 1.5 0 L19.5 0 L25 5.5 L25 24.4 L0 24.4 Z" fill="#1d95c6"/>
<rect x="8.5" y="0" width="9.5" height="9" fill="#7fdcfb"/><rect x="14" y="1.8" width="2.4" height="5.2" fill="#1d95c6"/>
<rect x="4" y="14" width="17" height="10.4" fill="#60d6fb"/></svg>
<div class="t " style="left:1096.4px;top:786.4px;color:#3a3a3a;">保存</div>
<div class="abs" style="left:286px;top:830.5px;width:1783px;height:69.1px;background:#fbfbfb"></div>
<div class="abs" style="left:300px;top:845px;width:137.5px;height:40.6px;background:#fff;border:1.5px solid #a9d6ee;border-radius:4px"></div>
<div class="abs" style="left:301.5px;top:846.5px;width:130.9px;height:38.5px;overflow:hidden">
<div class="t " style="left:4.3px;top:5.8px;color:#b3b3b3;">绑定类型</div>
</div>
<div class="abs" style="left:445.3px;top:845px;width:102.30000000000001px;height:40.6px;background:#fff;border:1.5px solid #a9d6ee;border-radius:4px"></div>
<div class="abs" style="left:446.8px;top:846.5px;width:95.70000000000002px;height:38.5px;overflow:hidden">
<div class="t " style="left:4.3px;top:5.8px;color:#b3b3b3;">就医类型</div>
</div>
<div class="abs" style="left:555.3px;top:845px;width:102.30000000000007px;height:40.6px;background:#fff;border:1.5px solid #a9d6ee;border-radius:4px"></div>
<div class="abs" style="left:556.8px;top:846.5px;width:95.70000000000007px;height:38.5px;overflow:hidden">
<div class="t " style="left:4.3px;top:5.8px;color:#000;">长嘱</div>
</div>
<div class="t " style="left:664.3px;top:850.3px;color:#000;">编码</div>
<div class="abs" style="left:721px;top:845px;width:207.60000000000002px;height:40.6px;background:#fff;border:1.5px solid #a9d6ee;border-radius:4px"></div>
<div class="abs" style="left:722.5px;top:846.5px;width:201.00000000000003px;height:38.5px;overflow:hidden">
<div class="t " style="left:4.3px;top:5.8px;color:#b3b3b3;">项目编码</div>
</div>
<div class="abs" style="left:935.5px;top:845px;width:346.79999999999995px;height:40.6px;background:#fff;border:1.5px solid #a9d6ee;border-radius:4px"></div>
<div class="abs" style="left:937.0px;top:846.5px;width:340.19999999999993px;height:38.5px;overflow:hidden">
<div class="t " style="left:4.3px;top:5.8px;color:#b3b3b3;">项目名称</div>
</div>
<div class="t " style="left:1289.8px;top:850.3px;color:#000;">数量</div>
<div class="abs" style="left:1346.3px;top:845px;width:49.40000000000009px;height:40.6px;background:#fff;border:1.5px solid #a9d6ee;border-radius:4px"></div>
<div class="abs" style="left:1347.8px;top:846.5px;width:42.80000000000009px;height:38.5px;overflow:hidden">
<div class="t " style="left:4.3px;top:5.8px;color:#000;"><span class="l">1</span></div>
</div>
<div class="abs" style="left:1403px;top:845px;width:102.70000000000005px;height:40.6px;background:#fff;border:1.5px solid #a9d6ee;border-radius:4px"></div>
<div class="abs" style="left:1404.5px;top:846.5px;width:96.10000000000005px;height:38.5px;overflow:hidden">
<div class="t " style="left:4.3px;top:5.8px;color:#b3b3b3;">单位</div>
</div>
<div class="abs" style="left:1513px;top:845px;width:102.79999999999995px;height:40.6px;background:#fff;border:1.5px solid #a9d6ee;border-radius:4px"></div>
<div class="abs" style="left:1514.5px;top:846.5px;width:96.19999999999996px;height:38.5px;overflow:hidden">
<div class="t " style="left:4.3px;top:5.8px;color:#000;">任意</div>
</div>
<div class="abs" style="left:1623px;top:845px;width:154.79999999999995px;height:40.6px;background:#fff;border:1.5px solid #a9d6ee;border-radius:4px"></div>
<div class="abs" style="left:1624.5px;top:846.5px;width:148.19999999999996px;height:38.5px;overflow:hidden">
<div class="t " style="left:4.3px;top:5.8px;color:#b3b3b3;">科室</div>
</div>
<div class="abs" style="left:1785px;top:845px;width:102.79999999999995px;height:40.6px;background:#fff;border:1.5px solid #a9d6ee;border-radius:4px"></div>
<div class="abs" style="left:1786.5px;top:846.5px;width:96.19999999999996px;height:38.5px;overflow:hidden">
<div class="t " style="left:4.3px;top:5.8px;color:#000;">任意</div>
</div>
<div class="abs" style="left:1895px;top:845px;width:156px;height:40.6px;background:#fff;border:1.5px solid #a9d6ee;border-radius:4px"></div>
<div class="abs" style="left:1896.5px;top:846.5px;width:149.4px;height:38.5px;overflow:hidden">
<div class="t " style="left:4.3px;top:5.8px;color:#b3b3b3;">职称</div>
</div>
<div class="abs" style="left:280px;top:905.4px;width:1789px;height:60.1px;background:#f5f7fa;border-top:1px solid #e9ebef;border-bottom:1.4px solid #e1e3e8;z-index:1"></div>
<div class="abs" style="left:332.0px;top:906.4px;width:1px;height:57.2px;background:#eff1f5;z-index:1"></div>
<div class="abs" style="left:379.5px;top:906.4px;width:1px;height:57.2px;background:#eff1f5;z-index:1"></div>
<div class="abs" style="left:570.1px;top:906.4px;width:1px;height:57.2px;background:#eff1f5;z-index:1"></div>
<div class="abs" style="left:1213.0px;top:906.4px;width:1px;height:57.2px;background:#eff1f5;z-index:1"></div>
<div class="abs" style="left:1533.2px;top:906.4px;width:1px;height:57.2px;background:#eff1f5;z-index:1"></div>
<div class="abs" style="left:1681.0px;top:906.4px;width:1px;height:57.2px;background:#eff1f5;z-index:1"></div>
<div class="abs" style="left:1892.9px;top:906.4px;width:1px;height:57.2px;background:#eff1f5;z-index:1"></div>
<div class="abs" style="left:342.85px;top:922.15px;width:24.5px;height:24.5px;border:1.8px solid #737373;border-radius:4.5px;background:#fff;z-index:2"></div>
<div class="t " style="left:385.8px;top:920.6px;color:#8b919a;z-index:2;">项目编号</div>
<div class="t " style="left:576.4px;top:920.6px;color:#8b919a;z-index:2;">项目名称</div>
<div class="t " style="left:1219.3px;top:920.6px;color:#8b919a;z-index:2;">规格</div>
<div class="t " style="left:1539.5px;top:920.6px;color:#8b919a;z-index:2;">单位</div>
<div class="t " style="left:1687.3px;top:920.6px;color:#8b919a;z-index:2;">售价</div>
<div class="t " style="left:1899.2px;top:920.6px;color:#8b919a;z-index:2;">项目类别</div>
<div class="abs" style="left:280px;top:964.6px;width:1789px;height:61.85px;background:#fff;border-bottom:1px solid #eeeeee"></div>
<div class="abs" style="left:280px;top:964.6px;width:52.5px;height:61.35px;background:#f4f5f5"></div>
<div class="t" style="left:280px;width:52.5px;text-align:center;letter-spacing:0;top:981.07px"><span class="l">1</span></div>
<div class="abs" style="left:342.85px;top:981.73px;width:24.5px;height:24.5px;border:1.8px solid #737373;border-radius:4.5px;background:#fff;z-index:2"></div>
<div class="t " style="left:385.8px;top:980.57px;"><span class="l">ZL47785</span></div>
<div class="t " style="left:576.4px;top:980.57px;"><span class="l">131</span>碘<span class="l">-</span>甲亢治疗</div>
<div class="t " style="left:1219.3px;top:980.57px;">次</div>
<div class="t " style="left:1539.5px;top:980.57px;">次</div>
<div class="t " style="left:1899.2px;top:980.57px;">治疗</div>
<div class="abs" style="left:280px;top:1025.95px;width:1789px;height:61.85px;background:#fafafa;border-bottom:1px solid #eeeeee"></div>
<div class="abs" style="left:280px;top:1025.95px;width:52.5px;height:61.35px;background:#f0f1f1"></div>
<div class="t" style="left:280px;width:52.5px;text-align:center;letter-spacing:0;top:1042.42px"><span class="l">2</span></div>
<div class="abs" style="left:342.85px;top:1043.08px;width:24.5px;height:24.5px;border:1.8px solid #737373;border-radius:4.5px;background:#fff;z-index:2"></div>
<div class="t " style="left:385.8px;top:1041.92px;"><span class="l">ZL47246</span></div>
<div class="t " style="left:576.4px;top:1041.92px;">鼻继发畸形修复术</div>
<div class="t " style="left:1219.3px;top:1041.92px;">次</div>
<div class="t " style="left:1539.5px;top:1041.92px;">次</div>
<div class="t " style="left:1899.2px;top:1041.92px;">治疗</div>
<div class="abs" style="left:280px;top:1087.3px;width:1789px;height:61.85px;background:#fff;border-bottom:1px solid #eeeeee"></div>
<div class="abs" style="left:280px;top:1087.3px;width:52.5px;height:61.35px;background:#f4f5f5"></div>
<div class="t" style="left:280px;width:52.5px;text-align:center;letter-spacing:0;top:1103.77px"><span class="l">3</span></div>
<div class="abs" style="left:342.85px;top:1104.42px;width:24.5px;height:24.5px;border:1.8px solid #737373;border-radius:4.5px;background:#fff;z-index:2"></div>
<div class="t " style="left:385.8px;top:1103.27px;"><span class="l">ZL47643</span></div>
<div class="t " style="left:576.4px;top:1103.27px;">鼻继发畸形修复术<span class="l">(</span>同切口<span class="l">)</span></div>
<div class="t " style="left:1219.3px;top:1103.27px;">次</div>
<div class="t " style="left:1539.5px;top:1103.27px;">次</div>
<div class="t " style="left:1899.2px;top:1103.27px;">治疗</div>
<div class="abs" style="left:280px;top:1148.6499999999999px;width:1789px;height:61.85px;background:#dcefff;border-bottom:1px solid #eeeeee"></div>
<div class="abs" style="left:280px;top:1148.6499999999999px;width:52.5px;height:61.35px;background:#ebebeb"></div>
<div class="t" style="left:280px;width:52.5px;text-align:center;letter-spacing:0;top:1165.12px"><span class="l">4</span></div>
<div class="abs" style="left:342.85px;top:1165.77px;width:24.5px;height:24.5px;border:1.8px solid #737373;border-radius:4.5px;background:#fff;z-index:2"></div>
<div class="t " style="left:385.8px;top:1164.62px;"><span class="l">ZL47644</span></div>
<div class="t " style="left:576.4px;top:1164.62px;">鼻继发畸形修复术<span class="l">(</span>再次手术<span class="l">)</span>加收</div>
<div class="t " style="left:1219.3px;top:1164.62px;">次</div>
<div class="t " style="left:1539.5px;top:1164.62px;">次</div>
<div class="t " style="left:1899.2px;top:1164.62px;">治疗</div>
<div class="abs" style="left:280px;top:1209.9999999999998px;width:1789px;height:61.85px;background:#fff;border-bottom:1px solid #eeeeee"></div>
<div class="abs" style="left:280px;top:1209.9999999999998px;width:52.5px;height:61.35px;background:#f4f5f5"></div>
<div class="t" style="left:280px;width:52.5px;text-align:center;letter-spacing:0;top:1226.47px"><span class="l">5</span></div>
<div class="abs" style="left:342.85px;top:1227.12px;width:24.5px;height:24.5px;border:1.8px solid #737373;border-radius:4.5px;background:#fff;z-index:2"></div>
<div class="t " style="left:385.8px;top:1225.97px;"><span class="l">FW53231</span></div>
<div class="t " style="left:576.4px;top:1225.97px;">病房空调降温费<span class="l">(</span>三人间<span class="l">)</span></div>
<div class="t " style="left:1219.3px;top:1225.97px;">次</div>
<div class="t " style="left:1539.5px;top:1225.97px;">次</div>
<div class="t " style="left:1687.3px;top:1225.97px;"><span class="l">4</span></div>
<div class="t " style="left:1899.2px;top:1225.97px;">服务</div>
<div class="abs" style="left:280px;top:1271.3499999999997px;width:1789px;height:61.85px;background:#fafafa;border-bottom:1px solid #eeeeee"></div>
<div class="abs" style="left:280px;top:1271.3499999999997px;width:52.5px;height:61.35px;background:#f0f1f1"></div>
<div class="t" style="left:280px;width:52.5px;text-align:center;letter-spacing:0;top:1287.82px"><span class="l">6</span></div>
<div class="abs" style="left:342.85px;top:1288.47px;width:24.5px;height:24.5px;border:1.8px solid #737373;border-radius:4.5px;background:#fff;z-index:2"></div>
<div class="t " style="left:385.8px;top:1287.32px;"><span class="l">FW53227</span></div>
<div class="t " style="left:576.4px;top:1287.32px;">病房空调降温费<span class="l">(</span>中央空调<span class="l">)</span>加收</div>
<div class="t " style="left:1539.5px;top:1287.32px;">次</div>
<div class="t " style="left:1899.2px;top:1287.32px;">服务</div>
<div class="abs" style="left:280px;top:1332.6999999999996px;width:1789px;height:61.85px;background:#fff;border-bottom:1px solid #eeeeee"></div>
<div class="abs" style="left:280px;top:1332.6999999999996px;width:52.5px;height:61.35px;background:#f4f5f5"></div>
<div class="t" style="left:280px;width:52.5px;text-align:center;letter-spacing:0;top:1349.17px"><span class="l">7</span></div>
<div class="abs" style="left:342.85px;top:1349.82px;width:24.5px;height:24.5px;border:1.8px solid #737373;border-radius:4.5px;background:#fff;z-index:2"></div>
<div class="t " style="left:385.8px;top:1348.67px;"><span class="l">FW53228</span></div>
<div class="t " style="left:576.4px;top:1348.67px;">病房空调降温费<span class="l">(</span>单人间<span class="l">)</span></div>
<div class="t " style="left:1219.3px;top:1348.67px;">次</div>
<div class="t " style="left:1539.5px;top:1348.67px;">次</div>
<div class="t " style="left:1687.3px;top:1348.67px;"><span class="l">6</span></div>
<div class="t " style="left:1899.2px;top:1348.67px;">服务</div>
<div class="abs" style="left:280px;top:159px;width:1.2px;height:1175px;background:#e6e6e6"></div>
</body></html>
